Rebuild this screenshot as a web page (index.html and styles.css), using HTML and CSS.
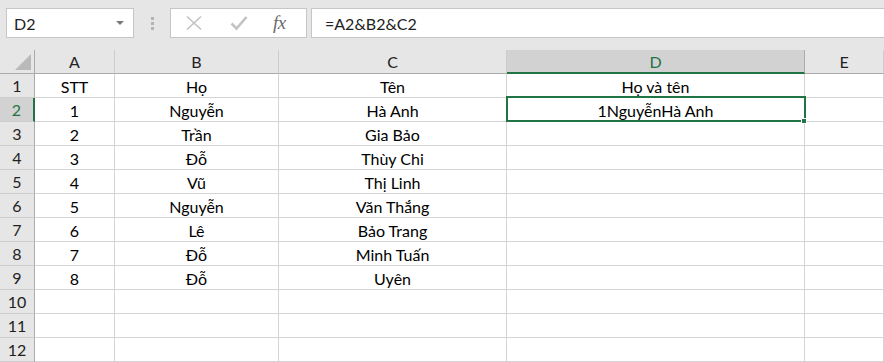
FILE: index.html
```html
<!DOCTYPE html>
<html>
<head>
<meta charset="utf-8">
<link rel="stylesheet" href="styles.css">
</head>
<body>
<div class="toolbar">
  <div class="namebox"><span>D2</span><span class="caret"></span></div>
  <div class="dots"><i></i><i></i><i></i></div>
  <div class="fnbtns">
    <svg class="ico-x" width="18" height="16" viewBox="0 0 18 16"><path d="M2 1.5 L16 14.5 M16 1.5 L2 14.5" stroke="#c3c3c3" stroke-width="1.7" fill="none"/></svg>
    <svg class="ico-ok" width="18" height="16" viewBox="0 0 18 16"><path d="M1.5 8.5 L6.5 13.5 L16.5 2" stroke="#c3c3c3" stroke-width="2.6" fill="none"/></svg>
    <span class="fx">fx</span>
  </div>
  <div class="formula">=A2&amp;B2&amp;C2</div>
</div>
<div class="sheet">
  <div class="corner"><span class="tri"></span></div>
  <div class="ch">A</div><div class="ch">B</div><div class="ch">C</div><div class="ch sel">D</div><div class="ch">E</div>

  <div class="rh">1</div><div class="c">STT</div><div class="c">Họ</div><div class="c">Tên</div><div class="c">Họ và tên</div><div class="c"></div>
  <div class="rh sel">2</div><div class="c">1</div><div class="c">Nguyễn</div><div class="c">Hà Anh</div><div class="c active">1NguyễnHà Anh<span class="handle"></span></div><div class="c"></div>
  <div class="rh">3</div><div class="c">2</div><div class="c">Trần</div><div class="c">Gia Bảo</div><div class="c"></div><div class="c"></div>
  <div class="rh">4</div><div class="c">3</div><div class="c">Đỗ</div><div class="c">Thùy Chi</div><div class="c"></div><div class="c"></div>
  <div class="rh">5</div><div class="c">4</div><div class="c">Vũ</div><div class="c">Thị Linh</div><div class="c"></div><div class="c"></div>
  <div class="rh">6</div><div class="c">5</div><div class="c">Nguyễn</div><div class="c">Văn Thắng</div><div class="c"></div><div class="c"></div>
  <div class="rh">7</div><div class="c">6</div><div class="c">Lê</div><div class="c">Bảo Trang</div><div class="c"></div><div class="c"></div>
  <div class="rh">8</div><div class="c">7</div><div class="c">Đỗ</div><div class="c">Minh Tuấn</div><div class="c"></div><div class="c"></div>
  <div class="rh">9</div><div class="c">8</div><div class="c">Đỗ</div><div class="c">Uyên</div><div class="c"></div><div class="c"></div>
  <div class="rh">10</div><div class="c"></div><div class="c"></div><div class="c"></div><div class="c"></div><div class="c"></div>
  <div class="rh">11</div><div class="c"></div><div class="c"></div><div class="c"></div><div class="c"></div><div class="c"></div>
  <div class="rh">12</div><div class="c"></div><div class="c"></div><div class="c"></div><div class="c"></div><div class="c"></div>
</div>
</body>
</html>
```
FILE: styles.css
```css
* { box-sizing: border-box; }
html, body { margin: 0; padding: 0; }
body {
  width: 884px;
  height: 362px;
  overflow: hidden;
  background: #e6e6e6;
  font-family: Lato, "Liberation Sans", Arial, sans-serif;
  font-size: 16px;
  color: #000;
}
.toolbar {
  height: 50px;
  display: flex;
  align-items: flex-start;
  padding: 8px 0 0 6px;
}
.namebox {
  width: 128px;
  height: 30px;
  background: #fff;
  border: 1px solid #c6c6c6;
  display: flex;
  align-items: center;
  justify-content: space-between;
  padding: 0 9px 0 7px;
  color: #222;
}
.caret {
  width: 0; height: 0;
  border-left: 4px solid transparent;
  border-right: 4px solid transparent;
  border-top: 4px solid #7a7a7a;
}
.dots {
  width: 36px;
  height: 30px;
  display: flex;
  flex-direction: column;
  align-items: center;
  justify-content: center;
  gap: 2px;
}
.dots i {
  display: block;
  width: 3px;
  height: 3px;
  background: #b3b3b3;
}
.fnbtns {
  width: 137px;
  height: 30px;
  background: #fff;
  border: 1px solid #c6c6c6;
  display: flex;
  align-items: center;
  padding-left: 14px;
}
.ico-x { margin-right: 27px; }
.ico-ok { margin-right: 25px; }
.fx {
  font-family: "Liberation Serif", "Times New Roman", serif;
  font-style: italic;
  font-size: 19px;
  color: #6b6b6b;
  letter-spacing: -0.5px;
}
.formula {
  flex: 1;
  height: 30px;
  margin-left: 4px;
  margin-right: -2px;
  background: #fff;
  border: 1px solid #c6c6c6;
  display: flex;
  align-items: center;
  padding-left: 13px;
  color: #222;
}
.sheet {
  display: grid;
  grid-template-columns: 35px 80px 164px 228px 298px 1fr;
  grid-template-rows: 24px repeat(12, 24px);
  background: #fff;
}
.corner {
  position: relative;
  background: #e6e6e6;
  border-right: 1px solid #ababab;
  border-bottom: 1px solid #ababab;
}
.tri {
  position: absolute;
  right: 3px;
  bottom: 3px;
  width: 0; height: 0;
  border-left: 16px solid transparent;
  border-bottom: 16px solid #b9b9b9;
}
.ch {
  background: #e6e6e6;
  border-right: 1px solid #cdcdcd;
  border-bottom: 1px solid #ababab;
  display: flex;
  align-items: center;
  justify-content: center;
  color: #222;
}
.ch.sel {
  background: #d2d2d2;
  color: #217346;
  border-bottom: 2px solid #217346;
  border-right-color: #ababab;
}
.rh {
  background: #e6e6e6;
  border-right: 1px solid #ababab;
  border-bottom: 1px solid #cdcdcd;
  display: flex;
  align-items: center;
  justify-content: center;
  color: #222;
}
.rh.sel {
  background: #d2d2d2;
  color: #217346;
  border-right: 2px solid #217346;
}
.c {
  border-right: 1px solid #d4d4d4;
  border-bottom: 1px solid #d4d4d4;
  display: flex;
  align-items: center;
  justify-content: center;
  white-space: nowrap;
  padding-top: 1px;
}
.c.active {
  position: relative;
}
.c.active::after {
  content: "";
  position: absolute;
  top: -2px;
  left: -1px;
  right: -2px;
  bottom: -1px;
  border: 2px solid #217346;
  pointer-events: none;
}
.handle {
  position: absolute;
  right: -3px;
  bottom: -3px;
  width: 6px;
  height: 6px;
  background: #217346;
  border: 1px solid #fff;
  z-index: 2;
}
```
